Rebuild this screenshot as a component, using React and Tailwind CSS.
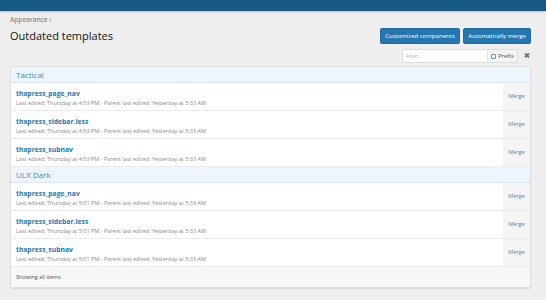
import React from "react";

const sections = [
  { name: "Tactical", time: "4:53 PM" },
  { name: "ULX Dark", time: "5:01 PM" },
];
const items = ["thxpress_page_nav", "thxpress_sidebar.less", "thxpress_subnav"];

export default function App() {
  return (
    <div className="w-[546px] h-[300px] bg-[#eeeeee] overflow-hidden" style={{ fontFamily: '"Open Sans", "Noto Sans", sans-serif' }}>
      <div className="h-[11px] bg-[#185886] shadow-[0_1px_2px_rgba(0,0,0,0.2)]" />
      <div className="pl-[10px] pr-[15px]">
        <div className="mt-[4px] h-[10px] text-[6.5px] leading-[10px] text-[#8c8c8c] font-semibold">Appearance ›</div>
        <div className="mt-[3px] flex items-center justify-between h-[16px]">
          <h1 className="text-[11px] leading-[16px] text-[#141414]">Outdated templates</h1>
          <div className="flex gap-[3px]">
            <button className="h-[16px] w-[80px] rounded-[2px] bg-[#2577b1] text-white text-[6px] leading-[14px] border border-[#1f6aa0]">Customized components</button>
            <button className="h-[16px] w-[68px] rounded-[2px] bg-[#2577b1] text-white text-[6px] leading-[14px] border border-[#1f6aa0]">Automatically merge</button>
          </div>
        </div>
        <div className="mt-[5px] flex justify-end items-center">
          <div className="flex h-[14px] border border-[#dcdcdc] rounded-[2px] bg-white">
            <div className="w-[84px] px-[3px] text-[5px] leading-[12px] text-[#b0b0b0]">Filter...</div>
            <div className="flex items-center gap-[2px] px-[3px] bg-[#f5f5f5] border-l border-[#e5e5e5] text-[6px] text-[#505050]">
              <span className="w-[5px] h-[5px] border border-[#6a8fb5] rounded-[1px] bg-white" />
              Prefix
            </div>
          </div>
          <div className="w-[13px] pl-[6px] text-left text-[7px] leading-[14px] text-[#6e6e6e] font-bold">✖</div>
        </div>
        <div className="mt-[3px] bg-white border border-[#dfdfdf] rounded-[2px] shadow-[0_1px_1px_rgba(0,0,0,0.08)] overflow-hidden">
          {sections.map((s) => (
            <div key={s.name}>
              <div className="h-[16px] px-[5px] bg-[#edf6fd] border-b border-[#dae8f5] text-[8px] leading-[16px] text-[#3a87c4]">{s.name}</div>
              {items.map((it) => (
                <div key={it} className="flex h-[28px] border-b border-[#ececec]">
                  <div className="flex-1 pl-[5px] pt-[6px]">
                    <div className="text-[6.8px] leading-[10px] font-bold text-[#2577b1]">{it}</div>
                    <div className="text-[5.5px] leading-[9px] text-[#8c8c8c]">Last edited: Thursday at {s.time} - Parent last edited: Yesterday at 5:33 AM</div>
                  </div>
                  <div className="w-[27px] bg-[#f5f5f5] flex items-center justify-center text-[5.5px] text-[#5f84b0]">Merge</div>
                </div>
              ))}
            </div>
          ))}
          <div className="h-[20px] px-[5px] bg-[#f7f7f7] text-[5.5px] leading-[20px] text-[#505050]">Showing all items</div>
        </div>
      </div>
    </div>
  );
}
